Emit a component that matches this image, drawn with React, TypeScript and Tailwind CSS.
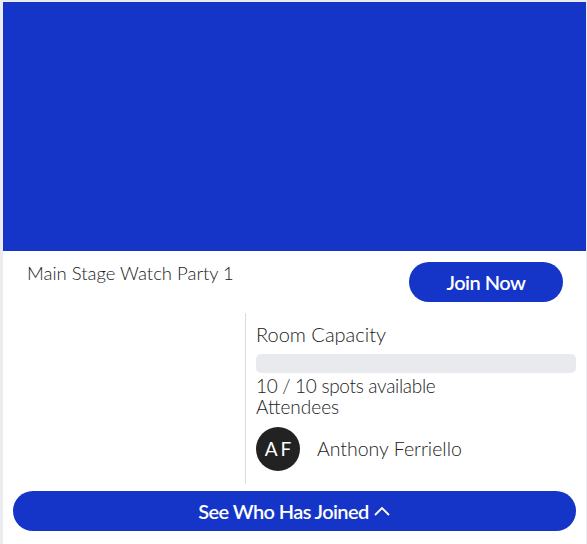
import React from "react";

export default function App() {
  return (
    <div className="min-h-[544px] w-[587px] bg-[#ebebf0] pt-[2px] pl-[3px] pr-[1px]" style={{ fontFamily: "Lato, 'Liberation Sans', sans-serif" }}>
      <div className="bg-white flex flex-col">
        <div className="h-[249px] bg-[#1534c8]" />
        <div className="flex items-start justify-between pl-[24px] pr-[23px] pt-[11px]">
          <div className="text-[18.5px] leading-[22px] text-[#222] font-light">Main Stage Watch Party 1</div>
          <button className="h-[40px] w-[154px] rounded-full bg-[#1534c8] text-white text-[20px] font-semibold tracking-[-0.5px]">Join Now</button>
        </div>
        <div className="flex mt-[11px]">
          <div className="w-[243px] border-r border-[#dcdcdc]" />
          <div className="flex-1 pl-[10px] pr-[10px] pb-[13px] text-[#222]">
            <div className="text-[20px] leading-[24px] font-light mt-[9px]">Room Capacity</div>
            <div className="h-[19px] rounded-[5px] bg-[#e8eaed] mt-[8px]" />
            <div className="text-[19px] leading-[21px] font-light mt-[2px] tracking-[-0.3px]">10 / 10 spots available</div>
            <div className="text-[19px] leading-[21px] font-light">Attendees</div>
            <div className="flex items-center mt-[10px]">
              <div className="w-[44px] h-[44px] rounded-full bg-[#222] text-white flex items-center justify-center text-[19px] tracking-[3px] pl-[3px]">AF</div>
              <div className="ml-[17px] text-[19.5px] font-light">Anthony Ferriello</div>
            </div>
          </div>
        </div>
        <div className="px-[10px] pt-[7px] pb-[13px]">
          <button className="h-[40px] w-full rounded-full bg-[#1534c8] text-white text-[20px] font-semibold tracking-[-0.6px] flex items-center justify-center gap-[4px]">
            See Who Has Joined
            <svg width="18" height="12" viewBox="0 0 18 12" fill="none" stroke="white" strokeWidth="1.8"><path d="M2 10 L9 3 L16 10" /></svg>
          </button>
        </div>
      </div>
    </div>
  );
}
